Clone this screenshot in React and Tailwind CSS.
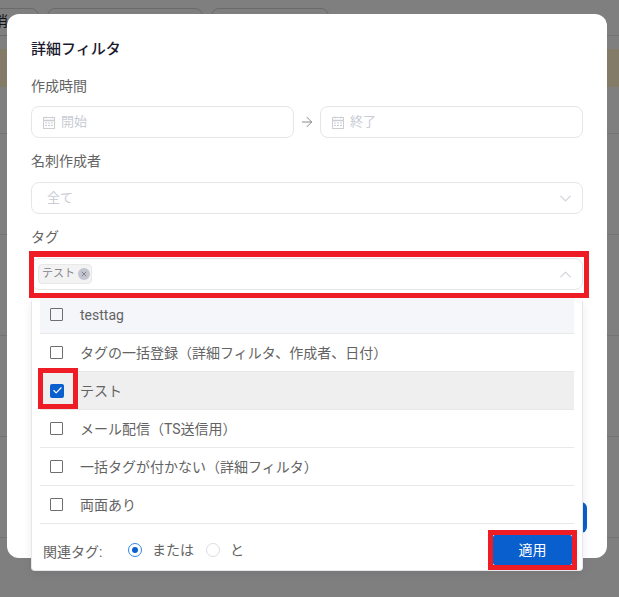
import React from 'react';
import { ArrowRight, ChevronDown, ChevronUp, X, Check } from 'lucide-react';

const options = [
  { label: 'testtag', rowClass: 'bg-[#f5f6fa]' },
  { label: 'タグの一括登録（詳細フィルタ、作成者、日付）', rowClass: '' },
  { label: 'テスト', rowClass: 'bg-[#efefef]', checked: true },
  { label: 'メール配信（TS送信用）', rowClass: '' },
  { label: '一括タグが付かない（詳細フィルタ）', rowClass: '' },
  { label: '両面あり', rowClass: '' },
];

const CalendarIcon = () => (
  <svg width="12" height="13" viewBox="0 0 12 13" className="shrink-0 text-[#ccced6]">
    <path d="M3 0.5v2M9 0.5v2" stroke="currentColor" strokeWidth="1" />
    <rect x="0.5" y="1.5" width="11" height="11" fill="none" stroke="currentColor" strokeWidth="1" />
    <path d="M0.5 4.5h11" stroke="currentColor" strokeWidth="1.5" />
    <path d="M2 7h8M2 9.5h8" stroke="currentColor" strokeWidth="1" strokeDasharray="2 1" />
  </svg>
);

const DateInput = ({ text }) => (
  <div className="flex h-8 flex-1 items-center gap-[6px] rounded-lg border border-[#e6e6e8] px-[11px] text-[13px] text-[#c9ccd4]">
    <CalendarIcon />
    <span>{text}</span>
  </div>
);

const Label = ({ children, className }) => (
  <div className={`h-[22px] text-sm leading-[22px] text-[#636363] ${className}`}>{children}</div>
);

const OptionRow = ({ label, rowClass, checked }) => (
  <div className={`flex h-[38px] items-center border-b border-[#e8e8e8] ${rowClass}`}>
    {checked ? (
      <span className="ml-[10px] flex h-[14px] w-[14px] items-center justify-center rounded-[2px] bg-[#0a5fce]">
        <Check size={11} strokeWidth={2.5} className="text-white" />
      </span>
    ) : (
      <span className="ml-[10px] h-[13px] w-[13px] rounded-[1px] border-[1.5px] border-[#6e6e6e]" />
    )}
    <span className={`text-sm text-[#636363] ${checked ? 'ml-[16px]' : 'ml-[17px]'}`}>{label}</span>
  </div>
);

const Radio = ({ selected, className = '' }) =>
  selected ? (
    <span className={`flex h-[14px] w-[14px] shrink-0 items-center justify-center rounded-full border border-[#2f86eb] ${className}`}>
      <span className="h-[6px] w-[6px] rounded-full bg-[#0a5fce]" />
    </span>
  ) : (
    <span className={`h-[14px] w-[14px] shrink-0 rounded-full border border-[#dcdde3] ${className}`} />
  );

export default function App() {
  return (
    <div
      className="relative h-[597px] w-[619px] overflow-hidden bg-[#7f7f7f]"
      style={{ fontFamily: 'Roboto, "Noto Sans CJK JP", sans-serif' }}
    >
      {/* Page behind the backdrop */}
      <div className="flex h-[36px] gap-2 border-b border-[#737373] pt-2">
        <div className="-ml-3 h-7 w-[51px] rounded-lg border border-[#6a6a6a] pl-[5px] text-sm leading-6 text-[#111]">消</div>
        <div className="h-7 w-[156px] rounded-lg border border-[#6a6a6a]" />
        <div className="h-7 w-[118px] rounded-lg border border-[#6a6a6a]" />
      </div>
      <div className="mt-[13px] h-[38px] bg-[#837a68]" />
      <div className="h-[47px] border-b border-[#737373]" />
      <div className="h-[101px] border-b border-[#737373]" />
      <div className="h-[101px] border-b border-[#737373]" />
      <div className="h-[101px] border-b border-[#737373]" />
      <div className="h-[101px] border-b border-[#737373]" />

      {/* Modal */}
      <div className="absolute left-[7px] top-[14px] flex h-[544px] w-[600px] flex-col rounded-xl bg-white px-6 pt-6">
        <div className="h-[22px] text-[15px] font-medium leading-[22px] text-[#1a1a2e]">詳細フィルタ</div>

        <Label className="mt-[15px]">作成時間</Label>
        <div className="mt-[9px] flex items-center">
          <DateInput text="開始" />
          <ArrowRight size={16} strokeWidth={1.5} className="mx-[5px] text-[#8a8a8a]" />
          <DateInput text="終了" />
        </div>

        <Label className="mt-3">名刺作成者</Label>
        <div className="mt-[10px] flex h-8 items-center justify-between rounded-lg border border-[#e6e6e8] pl-[15px] pr-[7px] text-[13px] text-[#c9ccd4]">
          <span>全て</span>
          <ChevronDown size={19} strokeWidth={1.5} className="text-[#d0d3da]" />
        </div>

        <Label className="mt-3">タグ</Label>
        <div className="mt-[10px] flex h-8 items-center justify-between rounded-lg border border-[#e6e6e8] pl-[6px] pr-[7px]">
          <span className="flex h-5 items-center gap-[3px] rounded border border-[#e8e8e8] bg-[#f3f3f3] pl-[3px] pr-[1px] text-[11px] text-[#85858a]">
            テスト
            <span className="flex h-3 w-3 items-center justify-center rounded-full bg-[#c3c6d0]">
              <X size={8} strokeWidth={2.5} className="text-[#777]" />
            </span>
          </span>
          <ChevronUp size={19} strokeWidth={1.5} className="text-[#d0d3da]" />
        </div>

        {/* Footer button, mostly covered by the dropdown */}
        <div className="mt-auto mb-[25px] flex justify-end">
          <div className="-mr-1 h-[31px] w-20 rounded-md bg-[#0a5fce]" />
        </div>
      </div>

      {/* Tag dropdown */}
      <div className="absolute left-[31px] top-[301px] flex h-[270px] w-[552px] flex-col rounded-b border border-t-0 border-[#e6e6ec] bg-white px-2 shadow-[0_2px_10px_rgba(0,0,0,0.08)]">
        <div className="absolute left-[37px] top-[-3px] h-2 w-2 rotate-45 bg-white" />
        <div className="relative">
          <div className="-mb-[5px] -translate-y-[5px]">
            {options.map((o) => (
              <OptionRow key={o.label} {...o} />
            ))}
          </div>
        </div>
        <div className="flex flex-1 items-center text-sm text-[#636363]">
          <span className="ml-[3px] mt-[10px] w-[85px]">関連タグ:</span>
          <Radio selected className="mt-[6px]" />
          <span className="ml-[10px] mt-[5px]">または</span>
          <Radio className="ml-[12px] mt-[6px]" />
          <span className="ml-[10px] mt-[5px]">と</span>
          <button className="ml-auto mr-[2px] mt-[6px] h-[30px] w-[79px] rounded-[2px] bg-[#0a5fce] text-sm text-white">適用</button>
        </div>
      </div>

      {/* Red annotations */}
      <div className="absolute left-[29px] top-[251px] h-[47px] w-[560px] border-[5px] border-t-[6px] border-[#ee1c25]" />
      <div className="absolute left-[38px] top-[368px] h-[41px] w-10 border-[5px] border-[#ee1c25]" />
      <div className="absolute left-[488px] top-[530px] h-10 w-[89px] border-[5px] border-[#ee1c25]" />
    </div>
  );
}
